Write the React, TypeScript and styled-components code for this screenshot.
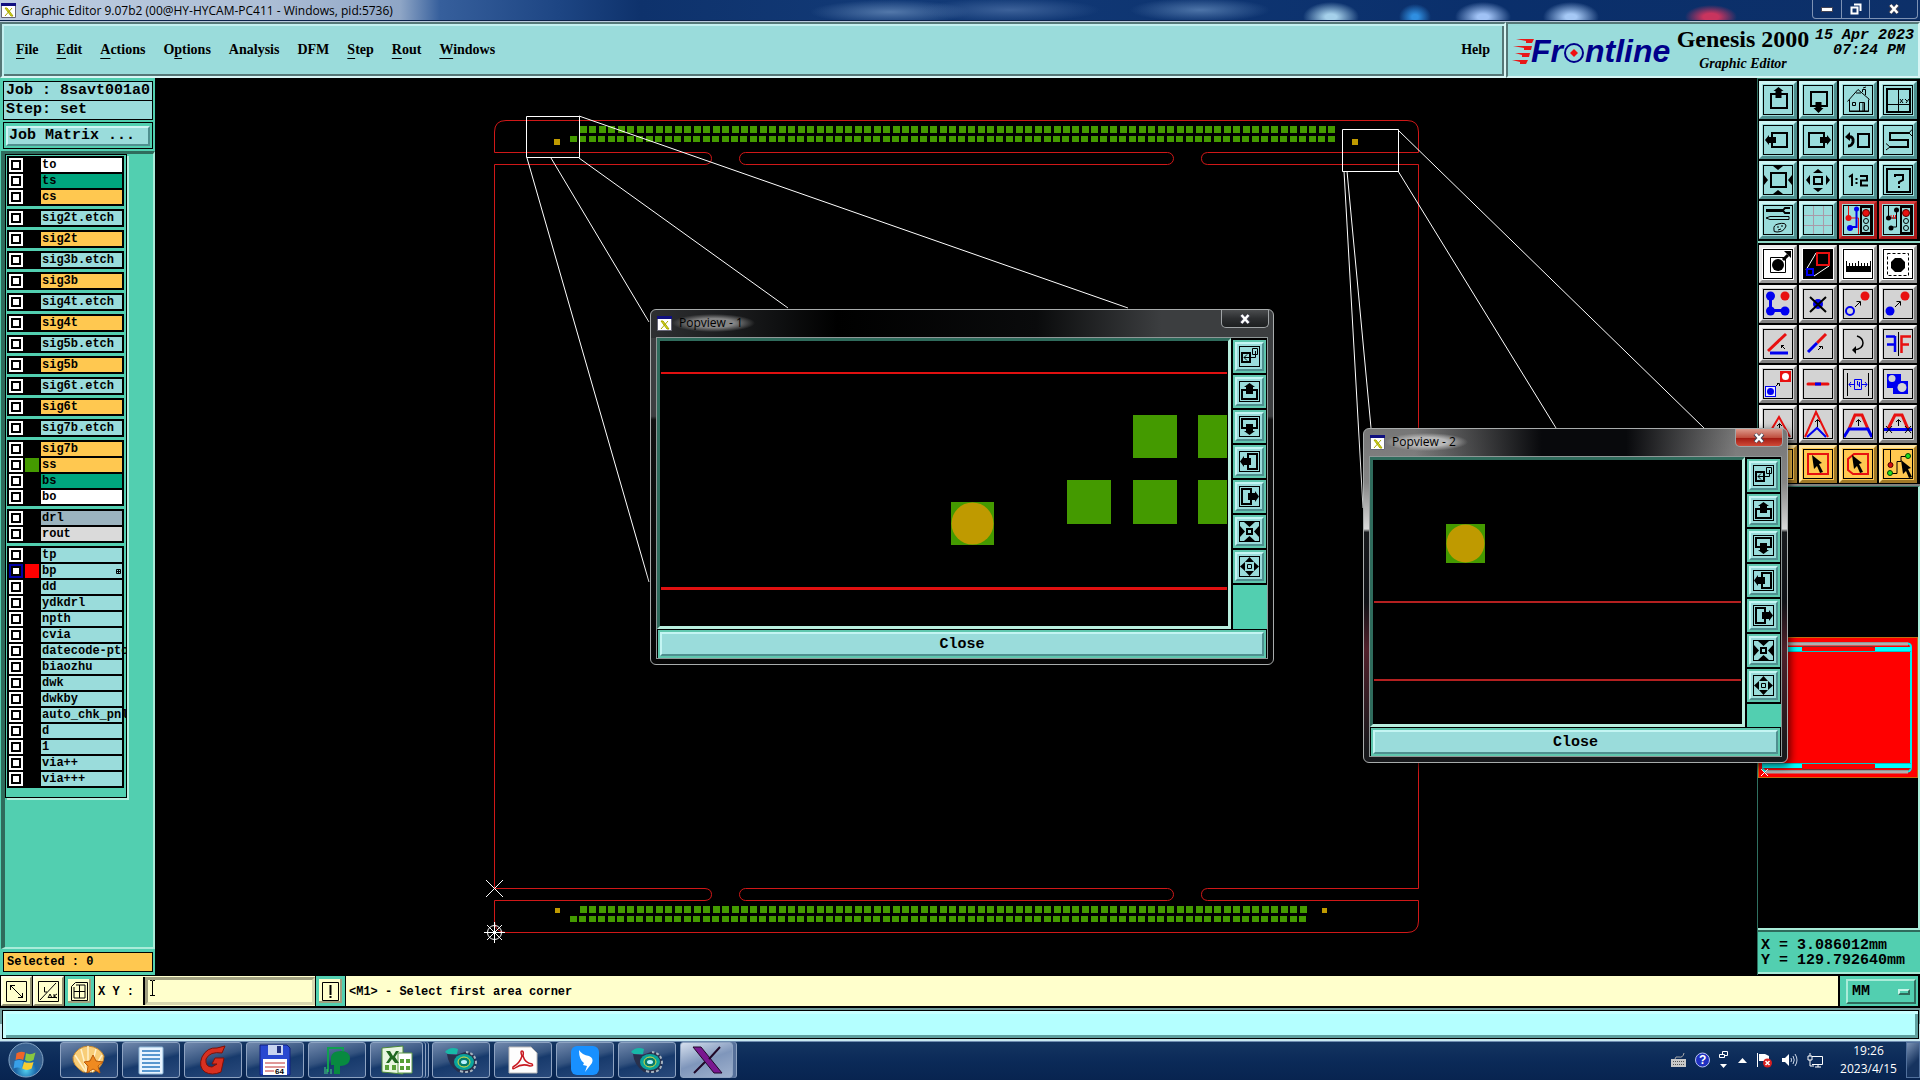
import React from "react";
import styled, { createGlobalStyle, css } from "styled-components";

const aqua = "#9adcdb";
const teal = "#52cfb0";
const tealDark = "#2f6b5c";
const amber = "#ffc850";
const cream = "#ffffcc";
const green = "#449a00";
const gold = "#bf9a00";
const mono = '"Liberation Mono", monospace';
const serif = '"Liberation Serif", serif';
const ui = '"Open Sans", "Noto Sans", sans-serif';

const GlobalStyle = createGlobalStyle`
  *, *::before, *::after { box-sizing: border-box; }
  body { margin: 0; background: #000; overflow: hidden; }
  button, input, select { font: inherit; color: inherit; margin: 0; padding: 0; border: 0; border-radius: 0; background: none; appearance: none; outline: none; }
  svg { display: block; flex: none; }
`;

const bevel = (light: string, dark: string, w = 3) => css`
  border: ${w}px solid;
  border-color: ${light} ${dark} ${dark} ${light};
`;

const Screen = styled.div`
  display: flex;
  flex-direction: column;
  height: 100vh;
  background: #000;
  color: #000;
`;

/* ---------- title bar ---------- */

const TitleBar = styled.header`
  display: flex;
  align-items: center;
  height: 22px;
  padding-left: 1px;
  border-bottom: 1px solid #b9c9dc;
  box-shadow: inset 0 -1px #0b2148;
  font: 13px/18px ${ui};
  background:
    radial-gradient(ellipse 26px 12px at 1711px 17px, #c9345e 30%, transparent),
    radial-gradient(ellipse 28px 15px at 1571px 17px, #a5c8f5 20%, transparent),
    radial-gradient(ellipse 28px 15px at 1483px 17px, #a0c2f5 20%, transparent),
    radial-gradient(ellipse 16px 13px at 1415px 17px, #2f8ee0 20%, transparent),
    radial-gradient(ellipse 28px 15px at 1331px 17px, #a5d0ea 20%, transparent),
    radial-gradient(ellipse 70px 12px at 1200px 10px, #4d74a8, transparent),
    radial-gradient(ellipse 90px 12px at 1010px 10px, #3c6199, transparent),
    radial-gradient(ellipse 80px 12px at 890px 12px, #5378aa, transparent),
    linear-gradient(90deg, #bdcde2 0, #aebfd6 260px, #8fa6c6 400px, #365f9c 440px, #1d4583 560px, #0e326c 640px, #123a77 900px, #0a2f6b 1500px, #0d3069 100%);
`;

const AppTitle = styled.h1`
  flex: 1;
  margin: 0 0 0 5px;
  font: inherit;
  font-size: 12px;
`;

const CaptionButtons = styled.div`
  display: flex;
  align-self: flex-start;
  height: 19px;
  margin-right: 2px;
  border: 1px solid #7d92b4;
  border-top: 0;
  border-radius: 0 0 4px 4px;
`;

const CaptionButton = styled.button<{ $wide?: boolean }>`
  display: grid;
  place-items: center;
  width: ${(p) => (p.$wide ? 48 : 28)}px;
  & + & { border-left: 1px solid #7d92b4; }
`;

/* ---------- menu bar ---------- */

const MenuBar = styled.div`
  display: flex;
  height: 56px;
  flex: none;
  background: ${aqua};
`;

const Menus = styled.nav`
  display: flex;
  flex: 1;
  align-items: center;
  gap: 18px;
  padding: 0 14px;
  border: 2px solid;
  border-color: #557777 #d8f6f5 #d8f6f5 #557777;
  box-shadow: inset 2px 2px #c4f0f0, inset -2px -2px #557777;
`;

const MenuItem = styled.button<{ $last?: boolean }>`
  font: bold 14px/18px ${serif};
  margin-left: ${(p) => (p.$last ? "auto" : "0")};
  u { text-underline-offset: 4px; }
`;

const Brand = styled.div`
  display: flex;
  width: 414px;
  padding: 2px 2px 0 2px;
  border: 2px solid;
  border-color: #557777 #d8f6f5 #d8f6f5 #557777;
`;

const BrandText = styled.div`
  display: flex;
  flex: none;
  flex-direction: column;
  align-items: center;
  width: 140px;
  font: bold 24px/26px ${serif};
  small { font: italic bold 14px/24px ${serif}; }
`;

const BrandClock = styled.time`
  flex: 1;
  padding-top: 2px;
  text-align: center;
  white-space: pre;
  font: italic bold 15px/15px ${mono};
`;

/* ---------- main area ---------- */

const Main = styled.main`
  position: relative;
  display: flex;
  flex: 1;
  min-height: 0;
`;

const Workspace = styled.section`
  flex: 1;
  min-width: 0;
  overflow: hidden;
`;

const SidePanel = styled.aside`
  display: flex;
  flex-direction: column;
  flex: none;
  width: 155px;
  padding: 1px 0 1px 1px;
  background: ${teal};
`;

const JobInfo = styled.dl`
  margin: 2px 2px 0;
  border: 1px solid #000;
  background: ${aqua};
  font: bold 15px/18px ${mono};
  dt { padding-left: 2px; white-space: pre; }
  dt + dt { border-top: 1px solid #000; }
`;

const MatrixBox = styled.div`
  margin: 2px 2px 2px;
  padding: 2px;
  border: 1px solid #000;
`;

const MatrixButton = styled.button`
  width: 100%;
  padding-left: 1px;
  text-align: left;
  font: bold 15px/16px ${mono};
  background: ${aqua};
  ${bevel("#cdf5f4", "#4f8f8f", 2)}
`;

const LayerWell = styled.div`
  flex: 1;
  min-height: 0;
  border-top: 3px solid ${tealDark};
  border-left: 4px solid ${tealDark};
  border-right: 2px solid #a9ecd9;
  border-bottom: 2px solid #a9ecd9;
`;

const LayerList = styled.div`
  display: flex;
  flex-direction: column;
  gap: 3px;
  width: 122px;
  padding: 1px 1px 9px;
  border: 1px solid #000;
  box-shadow: 2px 2px #b5efdf;
  overflow: hidden;
`;

const LayerGroup = styled.div`
  display: flex;
  flex-direction: column;
  gap: 2px;
  width: 117px;
  padding: 2px;
  background: #000;
`;

const LayerRow = styled.label`
  display: flex;
  gap: 2px;
  height: 14px;
`;

const LayerBox = styled.input<{ $active?: boolean }>`
  && {
    flex: none;
    width: 14px;
    height: 14px;
    border: 2px solid ${(p) => (p.$active ? "#0000a8" : "#fff")};
    background: #fff;
    box-shadow: inset 0 0 0 2px #000;
  }
`;

const LayerSwatch = styled.span<{ $fill?: string }>`
  flex: none;
  width: 14px;
  background: ${(p) => p.$fill ?? "#000"};
`;

const LayerName = styled.span<{ $fill: string }>`
  display: flex;
  justify-content: space-between;
  align-items: center;
  flex: none;
  width: 81px;
  padding: 1px 1px 0;
  background: ${(p) => p.$fill};
  font: bold 12px/13px ${mono};
  white-space: nowrap;
`;

const Selected = styled.output`
  margin: 3px 2px 2px;
  padding-left: 3px;
  border: 1px solid #000;
  background: ${amber};
  font: bold 12px/18px ${mono};
`;

/* ---------- tool panel ---------- */

const ToolPanel = styled.aside`
  display: flex;
  flex-direction: column;
  flex: none;
  width: 163px;
  border-left: 1px solid #2f7060;
  background: #000;
`;

const ToolGrid = styled.div<{ $lower?: boolean }>`
  display: grid;
  grid-template-columns: repeat(4, 38px);
  gap: 2px;
  padding: 2px 1px ${(p) => (p.$lower ? 1 : 2)}px;
  border-top: ${(p) => (p.$lower ? "0" : `1px solid ${tealDark}`)};
  border-bottom: 2px solid ${(p) => (p.$lower ? "#808080" : "#8fd8c6")};
`;

const tones = {
  aqua: [aqua, "#cdf5f4", "#4f8f8f"],
  white: ["#fff", "#ececec", "#9a9a9a"],
  gray: ["#d3d3d3", "#f4f4f4", "#808080"],
  amber: [amber, "#ffe6a4", "#a07828"],
  red: [aqua, "#d84040", "#a81818"],
} as const;
type Tone = keyof typeof tones;

const ToolButton = styled.button<{ $tone: Tone }>`
  display: grid;
  place-items: center;
  width: 38px;
  height: 38px;
  background: ${(p) => tones[p.$tone][0]};
  border: 3px solid;
  border-color: ${(p) => `${tones[p.$tone][1]} ${tones[p.$tone][2]} ${tones[p.$tone][2]} ${tones[p.$tone][1]}`};
`;

const Overview = styled.div`
  flex: 1;
  min-height: 0;
  overflow: hidden;
  border-top: 1px solid ${tealDark};
  border-right: 2px solid #a9ecd9;
  border-bottom: 2px solid #a9ecd9;
`;

const Coordinates = styled.output`
  display: block;
  margin-bottom: 1px;
  padding: 6px 0 4px 3px;
  border-top: 2px solid ${tealDark};
  border-bottom: 2px solid #a9ecd9;
  background: ${teal};
  white-space: pre;
  font: bold 15px/15px ${mono};
`;

/* ---------- prompt and message bars ---------- */

const PromptBar = styled.form`
  display: flex;
  align-items: stretch;
  flex: none;
  height: 33px;
  gap: 1px;
  padding: 1px 2px 2px 1px;
  background: #000;
  font: bold 12px/16px ${mono};
`;

const PromptButton = styled.button<{ $framed?: boolean }>`
  display: grid;
  place-items: center;
  width: ${(p) => (p.$framed ? 29 : 31)}px;
  background: ${cream};
  ${bevel("#ffffe8", "#8f8f70", 2)}
  ${(p) => p.$framed && css`border: 3px solid ${teal}; box-shadow: inset -2px -2px #a0a080;`}
`;

const XYField = styled.div`
  position: relative;
  display: flex;
  align-items: center;
  background: ${cream};
  padding-left: 3px;
  label { width: 47px; white-space: pre; padding-top: 1px; }
  input {
    width: 170px;
    height: 28px;
    padding: 0 6px;
    border: 3px solid;
    border-color: #a0a080 #d8d8b0 #d8d8b0 #a0a080;
    box-shadow: -2px 0 #000;
  }
  svg { position: absolute; left: 54px; top: 4px; }
`;

const Message = styled.p`
  flex: 1;
  margin: 0;
  padding: 1px 0 0 3px;
  background: ${cream};
  line-height: 30px;
`;

const UnitBox = styled.label`
  display: grid;
  align-items: center;
  width: 78px;
  padding: 3px 2px 3px 6px;
  margin-left: 1px;
  background: ${teal};
  font-size: 15px;
  select, i { grid-area: 1 / 1; }
  select { width: 100%; height: 25px; padding: 1px 0 0 4px; ${bevel("#a9ecd9", tealDark, 2)} }
  i { justify-self: end; width: 12px; height: 6px; margin-right: 6px; pointer-events: none; ${bevel("#c5f5e8", tealDark, 2)} }
`;

const StatusBar = styled.div`
  flex: none;
  height: 33px;
  padding: 2px 1px 2px 2px;
  background: linear-gradient(#6f9a9a 50%, #c8e8f0 50%);
  div { height: 29px; border: 1px solid #000; background: #b4ffff; box-shadow: inset 3px 3px #c8ffff, inset -3px -3px #5f9f9f; }
`;

/* ---------- task bar ---------- */

const TaskBar = styled.footer`
  display: flex;
  align-items: stretch;
  flex: none;
  height: 39px;
  padding: 0 0 2px 6px;
  border-top: 1px solid #6f8db0;
  background: linear-gradient(#143561, #0b2a58 50%, #082450);
  color: #fff;
  font: 12px/18px ${ui};
`;

const StartButton = styled.button`
  width: 54px;
`;

const TaskButton = styled.button<{ $active?: boolean; $stack?: boolean }>`
  display: grid;
  place-items: center;
  width: ${(p) => (p.$stack || p.$active ? 53 : 58)}px;
  margin-right: ${(p) => (p.$stack ? 9 : 4)}px;
  border: 1px solid #8ea3c2;
  border-radius: 3px;
  background: ${(p) =>
    p.$active
      ? "linear-gradient(160deg, #d5dfee, #7f96bb 50%, #9fb1cd)"
      : "linear-gradient(165deg, #7088ac 0, #34537f 45%, #173a6c 55%, #2a4a7c 100%)"};
  box-shadow: ${(p) => (p.$stack ? "2px 0 #173a6c, 3px 0 #8ea3c2, 5px 0 #173a6c, 6px 0 #8ea3c2" : p.$active ? "3px 0 #56709a, 4px 0 #8ea3c2" : "none")};
`;

const Tray = styled.div`
  display: flex;
  align-items: center;
  gap: 9px;
  margin-left: auto;
`;

const TrayClock = styled.time`
  width: 71px;
  text-align: center;
  white-space: pre;
`;

const ShowDesktop = styled.button`
  align-self: stretch;
  width: 14px;
  margin-left: -7px;
  border: 1px solid #51709c;
  background: linear-gradient(135deg, #7b93b5, #16335f 60%);
`;

/* ---------- pop-up views ---------- */

const PopWindow = styled.section<{ $x: number; $y: number; $glass?: boolean }>`
  position: absolute;
  left: ${(p) => p.$x}px;
  top: ${(p) => p.$y}px;
  padding: 0 5px 5px;
  border: 1px solid #a8acac;
  border-radius: 6px;
  box-shadow: 2px 3px 9px rgba(0, 0, 0, 0.7);
  background: ${(p) =>
    p.$glass
      ? "linear-gradient(90deg, transparent 12%, #08090c 42%, #08090c 62%, transparent 88%) 0 0 / 100% 28px no-repeat, linear-gradient(#767676, #858585 16%, #d8d8d8 30%, #17191c 31%, #101216 52%, #50202a 66%, #18191c 96%)"
      : "linear-gradient(90deg, #2e3032, #101112 20%, #000 30%, #0a0b0c 62%, #3c3e40 82%, #3c3e40) 0 0 / 100% 28px no-repeat, linear-gradient(#3c3e40, #3c3e40 30%, #111 31%, #050505)"};
`;

const PopTitle = styled.div`
  display: flex;
  align-items: center;
  justify-content: space-between;
  height: 27px;
  margin: 0 -1px 0 1px;
`;

const PopTitleText = styled.h2<{ $glass?: boolean }>`
  margin: 0 auto 2px 0;
  padding: 0 12px 0 7px;
  font: 12px/18px ${ui};
  color: #000;
  background: radial-gradient(ellipse closest-side, ${(p) => (p.$glass ? "#b8b8b8" : "#858585")} 50%, transparent);
`;

const PopX = styled.button<{ $glass?: boolean }>`
  display: grid;
  place-items: center;
  align-self: flex-start;
  width: 48px;
  height: 18px;
  border: 1px solid #a0a4a6;
  border-top: 0;
  border-radius: 0 0 5px 5px;
  background: ${(p) => (p.$glass ? "linear-gradient(#dc9a8c, #c05040 50%, #a01810 51%, #d04a38)" : "linear-gradient(#4a4c4e, #2c2e30 50%, #1d1f20)")};
`;

const PopBody = styled.div`
  display: grid;
  grid-template-columns: auto 36px;
  gap: 1px 0;
  border: 1px solid #8f9797;
  background: #000;
`;

const PopCanvas = styled.div`
  background: #000;
  border: 3px solid;
  border-color: ${tealDark} #b9efdf #b9efdf ${tealDark};
`;

const PopTools = styled.div`
  display: flex;
  flex-direction: column;
  gap: 2px;
  padding: 2px 0 0 2px;
  &::after { content: ""; flex: 1; width: 34px; background: ${teal}; }
`;

const PopToolButton = styled.button`
  display: grid;
  place-items: center;
  width: 33px;
  height: 33px;
  background: ${aqua};
  ${bevel("#c4f5f3", "#4f8f8f", 4)}
  outline: 2px solid #5fc7ae;
  outline-offset: -2px;
`;

const PopClose = styled.button`
  grid-column: 1 / -1;
  margin: 0 1px;
  padding-top: 1px;
  font: bold 15px/19px ${mono};
  background: ${aqua};
  ${bevel("#c4f5f3", "#4f8f8f", 4)}
  outline: 2px solid #5fc7ae;
  outline-offset: -2px;
`;

/* ---------- icons ---------- */

const K = { stroke: "#000", fill: "none" };
const RED = "#e81010";
const BLUE = "#0000f0";

const icons: Record<string, React.ReactNode> = {
  up: <><path {...K} strokeWidth="2" d="M8 9H24V23H8Z" /><path d="M15.500 2L20.500 6H18.500V13H12.500V6H10.500Z" /></>,
  down: <><path {...K} strokeWidth="2" d="M8 7H24V21H8Z" /><path d="M15.500 28L20.500 23H18.500V17H12.500V23H10.500Z" /></>,
  home: <path {...K} d="M4.500 16.500L15 4.500L26.500 14.500M6.500 14.500V26.500H25.500V14.500M13 8H18M9.500 17.500H12.500V20.500H9.500ZM16.500 26.500V17.500H21.500V26.500M20 17V26M19.500 7V4.500H22.500V10M20 3L23 2M6 26H26" />,
  grid2: <><path {...K} strokeWidth="2" d="M4 4H27V27H4Z" /><path {...K} d="M4 19.500H27M15.500 4V27" /><path {...K} d="M17 14L20 18M20 14L17 18M22 14L24 16M26 14L23 18" /></>,
  left: <><path {...K} strokeWidth="2" d="M9 8H24V22H9Z" /><path d="M2 15L6 10V12H13V18H6V20Z" /></>,
  right: <><path {...K} strokeWidth="2" d="M6 8H21V22H6Z" /><path d="M28 15L24 10V12H17V18H24V20Z" /></>,
  back: <><path {...K} strokeWidth="2" d="M15 9H26V22H15Z" /><path {...K} strokeWidth="3" d="M5 12Q11 11 10 17Q9 21 5 21" /><path d="M2 12L7 7V16Z" /></>,
  snake: <><path {...K} strokeWidth="2" d="M26 8H7V15H25V22H7" /><path {...K} d="M26 8L29 4.500M26 8L29 11M7 22L3 18.500M7 22L3 25" /></>,
  shrink: <><path {...K} strokeWidth="2" d="M8 8H23V22H8Z" /><path d="M10 1H20L15 5ZM10 29H20L15 25ZM1 10V20L5 15ZM29 10V20L25 15Z" /></>,
  expand: <><path {...K} strokeWidth="2" d="M11 12H19V19H11Z" /><path d="M10 8H20L15 4ZM10 23H20L15 27ZM7 10V20L3 15ZM23 10V20L27 15Z" /></>,
  ratio: <path {...K} strokeWidth="2" d="M6 12L9 10V21M13.500 13V15M13.500 17V19M17 11H24V15.500H18V20.500H25" />,
  help: <><path {...K} strokeWidth="2" d="M4 4H27V27H4Z" /><path {...K} strokeWidth="2" d="M12 12V10H20V15L16 17V19M16 21V23" /></>,
  tools: <><path d="M3 4H20V7H3Z" /><path {...K} strokeWidth="2" d="M27 3H22L20 5.500L22 8H27" /><path {...K} d="M3 13L7 11.500H26V14.500H7Z" /><path {...K} d="M11 25Q10 20 15 19Q23 17 23 21Q21 27 14 27Q10 27 11 25ZM14 22H16M18 21H20M15 25L18 24" /></>,
  mesh: <path d="M10.500 1V29M20.500 1V29M1 10.500H29M1 20.500H29" stroke="#a99aa8" fill="none" />,
  light1: <><path d="M5.500 0V13H15.500V29" stroke={RED} fill="none" /><path d="M13.500 4V22H7" stroke={BLUE} fill="none" strokeWidth="2" /><circle cx="5.500" cy="13" r="3" fill={RED} /><circle cx="13.500" cy="4" r="2.500" fill={BLUE} /><circle cx="7" cy="23" r="3" fill={BLUE} /><Light /></>,
  light2: <><path {...K} d="M5.500 1V13H13.500M13.500 5V22H8" /><path d="M8 10V14M10.500 10V14M12.500 10V14" stroke={RED} /><circle cx="5.500" cy="13" r="2.500" /><circle cx="13.500" cy="5" r="2.500" /><circle cx="8" cy="23" r="2.500" /><Light /></>,
  popDot: <><path {...K} d="M7.500 8.500H22.500V23.500H7.500Z" /><circle cx="15" cy="16" r="6" /><path d="M20 11L25 6" {...K} strokeWidth="3" /><path d="M21 2H28V9Z" /></>,
  popview: <><path d="M1 1H29V29H1Z" /><path d="M13 4L3 21M26 17L11 27" stroke="#fff" /><path d="M14 4H26V16H14Z" stroke={RED} strokeWidth="2" fill="none" /><path d="M4 20H10V26H4Z" stroke={BLUE} strokeWidth="2" fill="none" /></>,
  ruler: <><path d="M3 17H28V23H3Z" /><path {...K} d="M3.500 12V18M6.500 14V18M9.500 14V18M12.500 14V18M15.500 12V18M18.500 14V18M21.500 14V18M24.500 14V18M27.500 12V18" /></>,
  dotBox: <><path {...K} strokeDasharray="3 2" d="M4.500 4.500H25.500V26.500H4.500Z" /><path d="M12 9H18L22 13V19L18 23H12L8 19V13Z" /></>,
  link: <><path d="M7.500 7V21.500H22" stroke={BLUE} strokeWidth="3" fill="none" /><circle cx="7.500" cy="7" r="4.500" fill={BLUE} /><circle cx="7.500" cy="22" r="4.500" fill={BLUE} /><circle cx="22" cy="22" r="4.500" fill={BLUE} /><circle cx="22" cy="7" r="4.500" fill={RED} /></>,
  remove: <><circle cx="15" cy="15" r="5" fill={BLUE} /><path {...K} strokeWidth="2" d="M7 8L23 23M23 8L7 23" /></>,
  copyDot: <><circle cx="22" cy="7" r="4.500" fill={RED} /><circle cx="7" cy="22" r="4" stroke={BLUE} strokeWidth="2" fill="none" /><path {...K} d="M12 18L17 13M13.500 12.500H17.500V16.500" /></>,
  moveDot: <><circle cx="22" cy="7" r="4.500" fill={RED} /><circle cx="7" cy="22" r="4.500" fill={BLUE} /><path {...K} d="M12 18L17 13M13.500 12.500H17.500V16.500" /></>,
  angle: <><path d="M5 22L23 5" stroke={RED} strokeWidth="3" /><path d="M7 24H25" stroke={BLUE} strokeWidth="3" /><path {...K} d="M22 20L18 16M18.500 19V16.500H21" /></>,
  extend: <><path d="M23 5L14 14" stroke={RED} strokeWidth="3" /><path d="M14 14L5 23" stroke={BLUE} strokeWidth="3" /><path {...K} d="M15 21L19 17M16 17.500H19.500V20" /></>,
  rotate: <><path {...K} strokeWidth="1.500" d="M14 7Q20 9 20 14Q20 20 11 21" /><path d="M9 21L13 17V25Z" /></>,
  mirror: <><path {...K} d="M15.500 3V27" /><path d="M3 7.500H12M12 7V23M4 15.500H12" stroke={BLUE} strokeWidth="2.500" fill="none" /><path d="M18.500 24V7.500H28M18 15.500H26" stroke={RED} strokeWidth="2.500" fill="none" /></>,
  resize: <><rect x="17" y="2" width="11" height="11" fill={RED} /><circle cx="22.500" cy="7.500" r="3.500" fill="#fff" /><rect x="2.500" y="17.500" width="10" height="10" fill="#e8e8ff" stroke={BLUE} /><circle cx="7.500" cy="22.500" r="3.500" fill={BLUE} /><path {...K} d="M13 17L16 14M14 14.500H16.500V17" /></>,
  bar: <><path d="M5 15H25" stroke={RED} strokeWidth="3" strokeLinecap="round" /><path d="M12 15H18" stroke={BLUE} strokeWidth="3" /></>,
  gap: <><path {...K} d="M4.500 4V27M25.500 4V27" /><path d="M6 15.500H12M18 15.500H24M8 13L6 15.500L8 18M22 13L24 15.500L22 18M11.500 10.500H18.500V20.500H11.500ZM14.500 12V16H17M16.500 13V18" stroke={BLUE} fill="none" /></>,
  shapes: <><path d="M4 5H18V12H25V25H10V19H4Z" fill={BLUE} /><circle cx="9" cy="9.500" r="3.500" fill="#d3d3d3" /><circle cx="19" cy="18.500" r="4.500" fill="#d3d3d3" /></>,
  peak1: <><path d="M4 28L16 8L27 28" stroke={RED} strokeWidth="2" fill="none" /><path {...K} d="M16.500 22V15M14 17L16.500 14.500L19 17" /></>,
  peak2: <><path d="M2 28L13 3L25 28" stroke={RED} strokeWidth="2" fill="none" /><path d="M4 28L14 19L23 28" stroke={BLUE} strokeWidth="2" fill="none" /><path {...K} d="M14.500 18V11M12 13L14.500 10.500L17 13" /></>,
  trap1: <><path d="M6 20L12 6H19L25 20" stroke={RED} strokeWidth="3" fill="none" /><path d="M1 28L6 20H25L29 28" stroke={BLUE} strokeWidth="3" fill="none" /><path {...K} d="M15.500 17V11M13 13L15.500 10.500L18 13" /></>,
  trap2: <><path d="M5 20L12 6H19L25 20" stroke={RED} strokeWidth="3" fill="none" /><path d="M1 20.500H29" stroke={BLUE} strokeWidth="3" /><path {...K} d="M15.500 17V11M13 13L15.500 10.500L18 13M3 17L9 24M9 17L3 24M22 17L28 24M28 17L22 24" /></>,
  select1: <><circle cx="12" cy="12" r="6" stroke={RED} strokeWidth="2" fill="none" /><Pointer /></>,
  select2: <><path d="M5 5H25V25H5Z" stroke={RED} strokeWidth="2" fill="none" /><Pointer /></>,
  select3: <><path d="M11 5H25V25H10L5 21V10Z" stroke={RED} strokeWidth="2" fill="none" /><Pointer /></>,
  select4: <><path {...K} d="M7.500 1V16M7 24.500H14V12.500H18V7.500H25" /><circle cx="7.500" cy="16" r="2.500" fill="#d01010" stroke="#500" /><circle cx="7" cy="24" r="2.500" fill="#20e020" stroke="#040" /><circle cx="25" cy="7" r="2.500" fill="#20e020" stroke="#040" /><g transform="translate(9 5)"><Pointer /></g></>,
};

/* Smaller pictures, on a 21-unit grid, for the pop-up view tools. */
const popIcons: Record<string, React.ReactNode> = {
  open: <><path {...K} strokeWidth="2" d="M3 7H11V16H3Z" /><path {...K} d="M13.500 2.500H18.500V8.500H13.500ZM16.500 5V11.500H5M8 8.500L5 11.500L8 14.500" /></>,
  up: <><path {...K} strokeWidth="2" d="M3 9H18V18H3Z" /><path d="M10.500 2L16 6H14V13H7V6H5Z" /></>,
  down: <><path {...K} strokeWidth="2" d="M3 3H18V12H3Z" /><path d="M10.500 19L16 15H14V8H7V15H5Z" /></>,
  left: <><path {...K} strokeWidth="2" d="M9 3H18V18H9Z" /><path d="M1 10.500L5 5V7H12V14H5V16Z" /></>,
  right: <><path {...K} strokeWidth="2" d="M3 3H12V18H3Z" /><path d="M20 10.500L16 5V7H9V14H16V16Z" /></>,
  shrink: <><path {...K} strokeWidth="2" d="M8 8H13V13H8Z" /><path d="M5 1H16L10.500 6ZM5 20H16L10.500 15ZM1 5V16L6 10.500ZM20 5V16L15 10.500Z" /></>,
  expand: <><path {...K} d="M8.500 8.500H12.500V12.500H8.500Z" /><path d="M6 6H15L10.500 1ZM6 15H15L10.500 20ZM6 6V15L1 10.500ZM15 6V15L20 10.500Z" /></>,
};

function Light() {
  return (
    <>
      <path d="M18 2H28V28H18Z" fill={aqua} stroke="#000" strokeWidth="2" />
      <circle cx="23" cy="8" r="3.500" fill={RED} stroke="#500" />
      <circle cx="23" cy="16" r="2.500" {...K} />
      <circle cx="23" cy="23" r="2.500" {...K} />
    </>
  );
}

function Pointer() {
  return <path d="M9 6L19 14L16 15L20 23L17 24L14 17L11 20Z" />;
}

function Icon({ name, small }: { name: string; small?: boolean }) {
  const size = small ? 21 : 30;
  return (
    <svg width={size} height={size} viewBox={`0 0 ${size} ${size}`} aria-hidden="true">
      {small ? popIcons[name] : icons[name]}
      <rect x="0.500" y="0.500" width={size - 1} height={size - 1} {...K} />
    </svg>
  );
}

function XLogo() {
  return (
    <svg width="15" height="15" viewBox="0 0 15 15" aria-hidden="true">
      <path d="M.5.5H14.500V14.500H.5Z" fill="#fff" stroke="#667" />
      <path d="M0 0H15V3H0Z" fill="#101080" />
      <path d="M4 5H6L12 13H10ZM11 5L4 13" stroke="#a8a800" fill="#d8d820" />
    </svg>
  );
}

function CloseGlyph() {
  return (
    <svg width="12" height="10" viewBox="0 0 12 10" aria-hidden="true">
      <path d="M2 1L10 9M10 1L2 9" stroke="#445" strokeWidth="4" />
      <path d="M2.500 1L9.500 9M9.500 1L2.500 9" stroke="#fff" strokeWidth="2.500" />
    </svg>
  );
}

/* ---------- data ---------- */

const menus: [string, string, string][] = [
  ["", "F", "ile"], ["", "E", "dit"], ["", "A", "ctions"], ["O", "p", "tions"], ["Analysis", "", ""],
  ["DFM", "", ""], ["", "S", "tep"], ["", "R", "out"], ["", "W", "indows"],
];

type Layer = { name: string; fill: string; swatch?: string; active?: boolean };
const L = (name: string, fill = aqua, swatch?: string, active?: boolean): Layer => ({ name, fill, swatch, active });
const mask = "#00a67e";

const layerGroups: Layer[][] = [
  [L("to", "#fff"), L("ts", mask), L("cs", amber)],
  ...["2t", "3b", "4t", "5b", "6t"].flatMap((n) => [[L(`sig${n}.etch`)], [L(`sig${n}`, amber)]]),
  [L("sig7b.etch")],
  [L("sig7b", amber), L("ss", amber, green), L("bs", mask), L("bo", "#fff")],
  [L("drl", "#9bb3bf"), L("rout", "#dadada")],
  [
    L("tp"), L("bp", aqua, "#f00", true), L("dd"), L("ydkdrl"), L("npth"), L("cvia"), L("datecode-pto"),
    L("biaozhu"), L("dwk"), L("dwkby"), L("auto_chk_pnl"), L("d"), L("1"), L("via++"), L("via+++"),
  ],
];

const viewTools = [
  "up", "down", "home", "grid2", "left", "right", "back", "snake",
  "shrink", "expand", "ratio", "help", "tools", "mesh", "light1", "light2",
];

const editTools: [Tone, string[]][] = [
  ["white", ["popDot", "popview", "ruler", "dotBox"]],
  ["gray", ["link", "remove", "copyDot", "moveDot", "angle", "extend", "rotate", "mirror", "resize", "bar", "gap", "shapes", "peak1", "peak2", "trap1", "trap2"]],
  ["amber", ["select1", "select2", "select3", "select4"]],
];

const popTools = ["open", "up", "down", "left", "right", "shrink", "expand"];

/* ---------- drawings ---------- */

function FrontlineLogo() {
  return (
    <svg width="163" height="46" viewBox="0 0 163 46" role="img" aria-label="Frontline">
      <path d="M6 13H24L22 17H16V15ZM3 20H22L21 24H14V22ZM5 27H20L19 31H12V29ZM2 34H18L16 38H10V36Z" fill="#e81818" />
      <g fontFamily='"Liberation Sans", sans-serif' fontWeight="bold" fontStyle="italic" fontSize="32" fill="#00008a">
        <text x="21" y="36">Fr</text>
        <text x="75" y="36">ntline</text>
      </g>
      <circle cx="64" cy="27" r="9" fill={aqua} stroke="#00008a" strokeWidth="2" />
      <path d="M64 23L68 27L64 31L60 27Z" fill="#f01010" />
    </svg>
  );
}

const pads = (count: number, x: number, y: number, h: number) =>
  Array.from({ length: count }, (_, i) => `M${Math.round(x + i * 9.47)} ${y}h7v${h}h-7z`).join("");

function BoardDrawing() {
  return (
    <svg width="1602" height="897" viewBox="155 78 1602 897" aria-label="Board layout">
      <g fill="none" stroke="#d01818">
        <path d="M494.500 152.500V132Q494.500 120.500 506 120.500H1407Q1418.500 120.500 1418.500 132V152.500" />
        <path d="M494.500 152.500H705Q711.500 153 711.500 158.500T705 164.500H494.500V888.500H705Q711.500 889 711.500 894.500T705 900.500H494.500V921Q494.500 932.500 506 932.500H1407Q1418.500 932.500 1418.500 921V900.500H1207.500Q1201.500 900 1201.500 894.500T1207.500 888.500H1418.500V164.500H1207.500Q1201.500 164 1201.500 158.500T1207.500 152.500H1418.500" />
        <rect x="739.500" y="152.500" width="434" height="12" rx="6" />
        <rect x="739.500" y="888.500" width="434" height="12" rx="6" />
      </g>
      <path fill={green} d={pads(80, 580, 126, 7) + pads(81, 570, 136, 6) + pads(77, 580, 906, 7) + pads(78, 570, 916, 6)} />
      <path fill={gold} d="M554 139h6v6h-6zM1352 139h6v6h-6zM555 908h5v5h-5zM1322 908h5v5h-5z" />
      <g fill="none" stroke="#fff">
        <path d="M526.500 116.500H579.500V157.500H526.500ZM1342.500 129.500H1398.500V171.500H1342.500Z" />
        <path d="M579 116L1128 308M579 158L788 308M551 158L649 322M527 158L649 582" />
        <path d="M1398 130L1704 428M1398 171L1556 428M1347 171L1371 428M1344 171L1363 508" />
        <path d="M486 880L503 897M503 880L486 897M494.500 922V943M484 932.500H505M487 925L502 940M502 925L487 940" />
        <circle cx="494.500" cy="932.500" r="7" />
      </g>
    </svg>
  );
}

function OverviewDrawing() {
  return (
    <svg width="160" height="441" viewBox="0 0 160 441" aria-label="Overview">
      <rect x="0.500" y="150.500" width="159" height="140" fill="#f00" stroke="#c86a10" />
      <path d="M4 156.500H150Q153 157 153 160V280Q153 284 150 284.500H8Q5 284 5 280V156" fill="none" stroke="#00f0f0" strokeWidth="2" />
      <path d="M4 157H150M8 285H150" stroke="#b0b0b0" strokeWidth="3" />
      <path d="M5 161H43L46 159.500H114L117 161H153M5 281H43L46 282.500H114L117 281H153" fill="none" stroke="#733" />
      <path d="M5 162H44M117 162H153M5 279H44M117 279H153" stroke="#00ffff" strokeWidth="4" />
      <path d="M5 164.500H153M5 276.500H153" stroke="#00c8c8" />
      <path d="M3 282L10 289M10 282L3 289" stroke="#fff" />
    </svg>
  );
}

function Popview({ title, x, y, glass, children }: { title: string; x: number; y: number; glass?: boolean; children: React.ReactNode }) {
  return (
    <PopWindow $x={x} $y={y} $glass={glass} aria-label={title}>
      <PopTitle>
        <XLogo />
        <PopTitleText $glass={glass}>{title}</PopTitleText>
        <PopX $glass={glass} aria-label="Close window"><CloseGlyph /></PopX>
      </PopTitle>
      <PopBody>
        <PopCanvas>{children}</PopCanvas>
        <PopTools>
          {popTools.map((t) => (
            <PopToolButton key={t} aria-label={t}><Icon name={t} small /></PopToolButton>
          ))}
        </PopTools>
        <PopClose>Close</PopClose>
      </PopBody>
    </PopWindow>
  );
}

const camIcon = (
  <svg width="34" height="30" viewBox="0 0 34 30">
    <path d="M3 9Q4 20 14 27L24 28Q33 24 32 16Q31 7 21 7L12 10Z" fill="#28304c" />
    <path d="M16 26Q31 30 32 17Q31 8 22 7" fill="none" stroke="#a8b4c0" strokeWidth="2" strokeDasharray="3 2" />
    <ellipse cx="20" cy="17" rx="10" ry="8" fill="#0aa39c" />
    <ellipse cx="20" cy="17" rx="6" ry="5" fill="#067a6a" stroke="#e0e040" />
    <ellipse cx="20" cy="17" rx="3" ry="2" fill="#b8f0ff" />
    <path d="M1 7Q6 1 14 4L13 9H4Z" fill="#18b8a8" />
  </svg>
);

const tasks: { label: string; icon: React.ReactNode; stack?: boolean; active?: boolean }[] = [
  {
    label: "Shell",
    icon: (
      <svg width="34" height="30" viewBox="0 0 34 30">
        <path d="M11 27Q0 20 1 12Q5 2 16 1Q28 2 32 11Q32 20 22 27Z" fill="#f8cd78" stroke="#c88a30" />
        <path d="M14 27L3 10M15 27L9 4M16 27L16 1M18 27L24 4M20 27L30 10" stroke="#fff0c8" strokeWidth="1.500" />
        <path d="M21 10L24 16L31 17L26 21L28 28L21 24L15 28L16 21L12 17L18 16Z" fill="#f08a20" stroke="#b85808" />
      </svg>
    ),
  },
  {
    label: "Notes",
    icon: (
      <svg width="26" height="29" viewBox="0 0 26 29">
        <rect x="1" y="1" width="24" height="27" rx="1" fill="#e8f4ff" stroke="#90b8d8" />
        <path d="M4 5H22M4 9H22M4 13H22M4 17H22M4 21H22M4 25H22" stroke="#2878c0" strokeWidth="1.500" />
      </svg>
    ),
  },
  {
    label: "Genesis",
    icon: (
      <svg width="30" height="30" viewBox="0 0 30 30">
        <path d="M27 1L24 8Q12 6 8 14Q7 22 14 22L19 19H14L17 13H26L23 27Q14 31 7 27Q0 22 4 12Q9 2 19 3Z" fill="#d83020" stroke="#801008" />
      </svg>
    ),
  },
  {
    label: "Save",
    icon: (
      <svg width="32" height="32" viewBox="0 0 32 32">
        <path d="M1 1H28L31 4V31H1Z" fill="#2848d0" stroke="#102080" />
        <path d="M9 1H24V11H9Z" fill="#c8d4f0" /><path d="M18 2H22V9H18Z" fill="#203080" />
        <path d="M4 15H28V31H4Z" fill="#fff" /><path d="M6 19H26M6 23H26M6 27H15" stroke="#c03030" />
        <text x="16" y="30" fontSize="8" fontWeight="bold" fontFamily="Liberation Sans, sans-serif">64</text>
      </svg>
    ),
  },
  {
    label: "P",
    icon: (
      <svg width="30" height="30" viewBox="0 0 30 30">
        <path d="M6 27V3H21V6" fill="none" stroke="#10a050" strokeWidth="2" />
        <path d="M9 12Q10 6 19 6Q28 6 28 14Q27 21 18 21V29H12V20H9Z" fill="#088a40" />
        <path d="M3 29V22M5 29V24M9 29V24" stroke="#40d080" />
      </svg>
    ),
  },
  {
    label: "Excel",
    stack: true,
    icon: (
      <svg width="32" height="30" viewBox="0 0 32 30">
        <path d="M1 3L22 1V29L1 27Z" fill="#e8f6e0" stroke="#4c8a38" />
        <path d="M17 8H31V28H17Z" fill="#fff" stroke="#5c9a48" />
        <path d="M19 14H23V18H19ZM25 14H29V18H25ZM19 21H23V25H19ZM25 21H29V25H25ZM4 20H8V25H4ZM11 20H15V25H11Z" fill="#58a038" />
        <path d="M5 6H9L12 11L15 6H18L14 12L18 18H14L11 14L8 18H5L9 12Z" fill="#206820" />
      </svg>
    ),
  },
  { label: "CAM", icon: camIcon },
  {
    label: "PDF",
    icon: (
      <svg width="30" height="28" viewBox="0 0 30 28">
        <path d="M1 1H23L29 7V27H1Z" fill="#fdfdfd" stroke="#bbb" />
        <path d="M14 5Q16 5 15 10Q17 17 24 18Q26 20 22 20Q14 17 7 22Q4 24 5 21Q12 17 14 10Q12 5 14 5Z" fill="none" stroke="#c81820" strokeWidth="1.500" />
      </svg>
    ),
  },
  {
    label: "DingTalk",
    icon: (
      <svg width="28" height="29" viewBox="0 0 28 29">
        <rect width="28" height="29" rx="6" fill="#1890ff" />
        <path d="M8 4Q11 9 18 10Q23 12 21 17L14 26L16 20L12 19L13 17Q8 14 8 4Z" fill="#fff" />
      </svg>
    ),
  },
  { label: "CAM 2", icon: camIcon },
  {
    label: "X server",
    active: true,
    icon: (
      <svg width="34" height="30" viewBox="0 0 34 30">
        <path d="M3 2H11L32 28H24Z" fill="#7a1890" stroke="#200828" />
        <path d="M30 2L19 14M15 17L4 28" stroke="#200828" strokeWidth="2" />
      </svg>
    ),
  },
];

function TrayIcons() {
  return (
    <>
      <svg width="15" height="15" viewBox="0 0 15 15"><path d="M0 6H15V14H0Z" fill="#c8c8c8" /><path d="M2 8.500H13M2 11.500H13" stroke="#555" strokeDasharray="1 1" /><path d="M4 6Q4 3 8 4T13 0" stroke="#aaa" fill="none" /></svg>
      <svg width="15" height="16" viewBox="0 0 15 16"><circle cx="7.500" cy="8" r="7" fill="#2030c0" stroke="#b8c4f0" /><text x="4" y="12" fontSize="12" fontWeight="bold" fill="#fff" fontFamily="Liberation Sans, sans-serif">?</text></svg>
      <svg width="10" height="18" viewBox="0 0 10 18"><path d="M3.500 3V.5H8.500V4.500H6M.5 3.500H5.500V6.500H.5Z" stroke="#fff" fill="none" /><path d="M1 13H8L4.500 17Z" fill="#fff" /></svg>
      <svg width="9" height="5" viewBox="0 0 9 5"><path d="M0 5L4.500 0L9 5Z" fill="#fff" /></svg>
      <svg width="17" height="16" viewBox="0 0 17 16"><path d="M1.500 1V15" stroke="#fff" /><path d="M3 2H9L13 4V9H3Z" fill="#fff" /><circle cx="11.500" cy="11" r="4.500" fill="#d82020" /><path d="M9.500 9L13.500 13M13.500 9L9.500 13" stroke="#fff" strokeWidth="1.500" /></svg>
      <svg width="16" height="14" viewBox="0 0 16 14"><path d="M0 5H3L7 1V13L3 9H0Z" fill="#fff" /><path d="M9 5Q10 7 9 9M11 3Q13.500 7 11 11M13 1Q17 7 13 13" stroke="#cdd8e8" fill="none" /></svg>
      <svg width="17" height="16" viewBox="0 0 17 16"><path d="M5 4.500H15.500V12.500H5M8 15H14M11 12V15M3 1V4M1 4H5V8H1ZM3 8V14H7" stroke="#fff" fill="none" /></svg>
    </>
  );
}

export default function App() {
  return (
    <Screen>
      <GlobalStyle />
      <TitleBar>
        <XLogo />
        <AppTitle>Graphic Editor 9.07b2 (00@HY-HYCAM-PC411 - Windows, pid:5736)</AppTitle>
        <CaptionButtons>
          <CaptionButton aria-label="Minimize"><svg width="12" height="5"><path d="M0 0H12V5H0Z" fill="#445" /><path d="M1 1H11V4H1Z" fill="#fff" /></svg></CaptionButton>
          <CaptionButton aria-label="Restore"><svg width="12" height="12"><path d="M4 1.500H10.500V8M1.500 4.500H7.500V10.500H1.500Z" fill="none" stroke="#fff" strokeWidth="2" /></svg></CaptionButton>
          <CaptionButton aria-label="Close" $wide><CloseGlyph /></CaptionButton>
        </CaptionButtons>
      </TitleBar>

      <MenuBar>
        <Menus>
          {menus.map(([a, key, b]) => (
            <MenuItem key={a + key + b}>{a}{key && <u>{key}</u>}{b}</MenuItem>
          ))}
          <MenuItem $last>Help</MenuItem>
        </Menus>
        <Brand>
          <FrontlineLogo />
          <BrandText>Genesis 2000<small>Graphic Editor</small></BrandText>
          <BrandClock>{"15 Apr 2023\n 07:24 PM"}</BrandClock>
        </Brand>
      </MenuBar>

      <Main>
        <SidePanel>
          <JobInfo><dt>Job : 8savt001a0</dt><dt>Step: set</dt></JobInfo>
          <MatrixBox><MatrixButton>Job Matrix ...</MatrixButton></MatrixBox>
          <LayerWell>
            <LayerList>
              {layerGroups.map((group) => (
                <LayerGroup key={group[0].name}>
                  {group.map((layer) => (
                    <LayerRow key={layer.name}>
                      <LayerBox type="checkbox" $active={layer.active} />
                      <LayerSwatch $fill={layer.swatch} />
                      <LayerName $fill={layer.fill}>
                        {layer.name}
                        {layer.active && <svg width="5" height="5"><path d="M.5.5H4.500V4.500H.5ZM2.500 0V5M0 2.500H5" stroke="#000" fill="none" /></svg>}
                      </LayerName>
                    </LayerRow>
                  ))}
                </LayerGroup>
              ))}
            </LayerList>
          </LayerWell>
          <Selected>Selected : 0</Selected>
        </SidePanel>

        <Workspace><BoardDrawing /></Workspace>

        <ToolPanel>
          <ToolGrid>
            {viewTools.map((t) => (
              <ToolButton key={t} $tone={t.startsWith("light") ? "red" : "aqua"} aria-label={t}><Icon name={t} /></ToolButton>
            ))}
          </ToolGrid>
          <ToolGrid $lower>
            {editTools.flatMap(([tone, names]) =>
              names.map((t) => <ToolButton key={t} $tone={tone} aria-label={t}><Icon name={t} /></ToolButton>)
            )}
          </ToolGrid>
          <Overview><OverviewDrawing /></Overview>
          <Coordinates>{"X = 3.086012mm\nY = 129.792640mm"}</Coordinates>
        </ToolPanel>

        <Popview title="Popview - 1" x={650} y={231}>
          <svg width="568" height="285" aria-label="Detail 1">
            <path d="M1 31H567V33H1ZM1 246H567V249H1Z" fill="#e01010" />
            <path d="M473 74h44v43h-44zM538 74h29v43h-29zM407 139h44v44h-44zM473 139h44v44h-44zM538 139h29v44h-29zM291 161h43v43h-43z" fill={green} />
            <circle cx="312.500" cy="182.500" r="21" fill={gold} />
          </svg>
        </Popview>
        <Popview title="Popview - 2" x={1363} y={350} glass>
          <svg width="369" height="264" aria-label="Detail 2">
            <path d="M1 141H368V143H1ZM1 219H368V221H1Z" fill="#b42020" />
            <path d="M73 64h39v39h-39z" fill={green} />
            <circle cx="92.500" cy="83.500" r="19" fill={gold} />
          </svg>
        </Popview>
      </Main>

      <PromptBar onSubmit={(e) => e.preventDefault()}>
        <PromptButton type="button" aria-label="Drag mode"><svg width="21" height="21"><path d="M.5.5H20.500V20.500H.5ZM4 4L17 17M4.500 9V4.500H9M12 16.500H16.500V12" {...K} /></svg></PromptButton>
        <PromptButton type="button" aria-label="Angle mode"><svg width="21" height="21"><path d="M.5.5H20.500V20.500H.5ZM2 19L18 2M6.500 6V11H9M10 17L12 13L14 17M16 13V17M19 13L16 15L19 17M10 16.500H19" {...K} /></svg></PromptButton>
        <PromptButton type="button" $framed aria-label="Snap grid"><svg width="17" height="19"><path d="M.5 4.500L4.500 .5H16.500V18.500H.5ZM8.500 3V16M3 9.500H14M3 5V16H14V3H5" {...K} /></svg></PromptButton>
        <XYField>
          <label htmlFor="xy">X Y :</label>
          <input id="xy" type="text" />
          <svg width="7" height="17"><path d="M1 .5H3L3.500 1L4 .5H6M3.500 1V15M1 15.500H6" {...K} /></svg>
        </XYField>
        <PromptButton type="button" $framed aria-label="Alert"><svg width="17" height="19"><path d="M.5.5H16.500V18.500H.5Z" {...K} /><path d="M8.500 3V13M8.500 14V16" {...K} strokeWidth="2" /></svg></PromptButton>
        <Message>&lt;M1&gt; - Select first area corner</Message>
        <UnitBox>
          <select aria-label="Units" defaultValue="MM"><option>MM</option><option>INCH</option></select>
          <i />
        </UnitBox>
      </PromptBar>
      <StatusBar><div /></StatusBar>

      <TaskBar>
        <StartButton aria-label="Start">
          <svg width="39" height="36" viewBox="0 0 39 38">
            <defs><radialGradient id="orb" cy="0.8"><stop offset="0" stopColor="#50d0f0" /><stop offset="0.6" stopColor="#1c66a8" /><stop offset="1" stopColor="#38608e" /></radialGradient></defs>
            <circle cx="20" cy="19" r="18" fill="url(#orb)" stroke="#88a8c8" />
            <path d="M10 12Q14 9 19 11L17 19Q13 17 9 19Z" fill="#f06428" /><path d="M20 12Q25 14 30 11L28 19Q23 22 19 19Z" fill="#88c840" />
            <path d="M8 20Q13 18 17 20L15 28Q11 26 7 28Z" fill="#38a0e8" /><path d="M18 21Q23 23 28 21L26 28Q21 31 16 28Z" fill="#f8cc30" />
          </svg>
        </StartButton>
        {tasks.map((t) => (
          <TaskButton key={t.label} aria-label={t.label} $stack={t.stack} $active={t.active}>{t.icon}</TaskButton>
        ))}
        <Tray>
          <TrayIcons />
          <TrayClock>{"19:26\n2023/4/15"}</TrayClock>
          <ShowDesktop aria-label="Show desktop" />
        </Tray>
      </TaskBar>
    </Screen>
  );
}
